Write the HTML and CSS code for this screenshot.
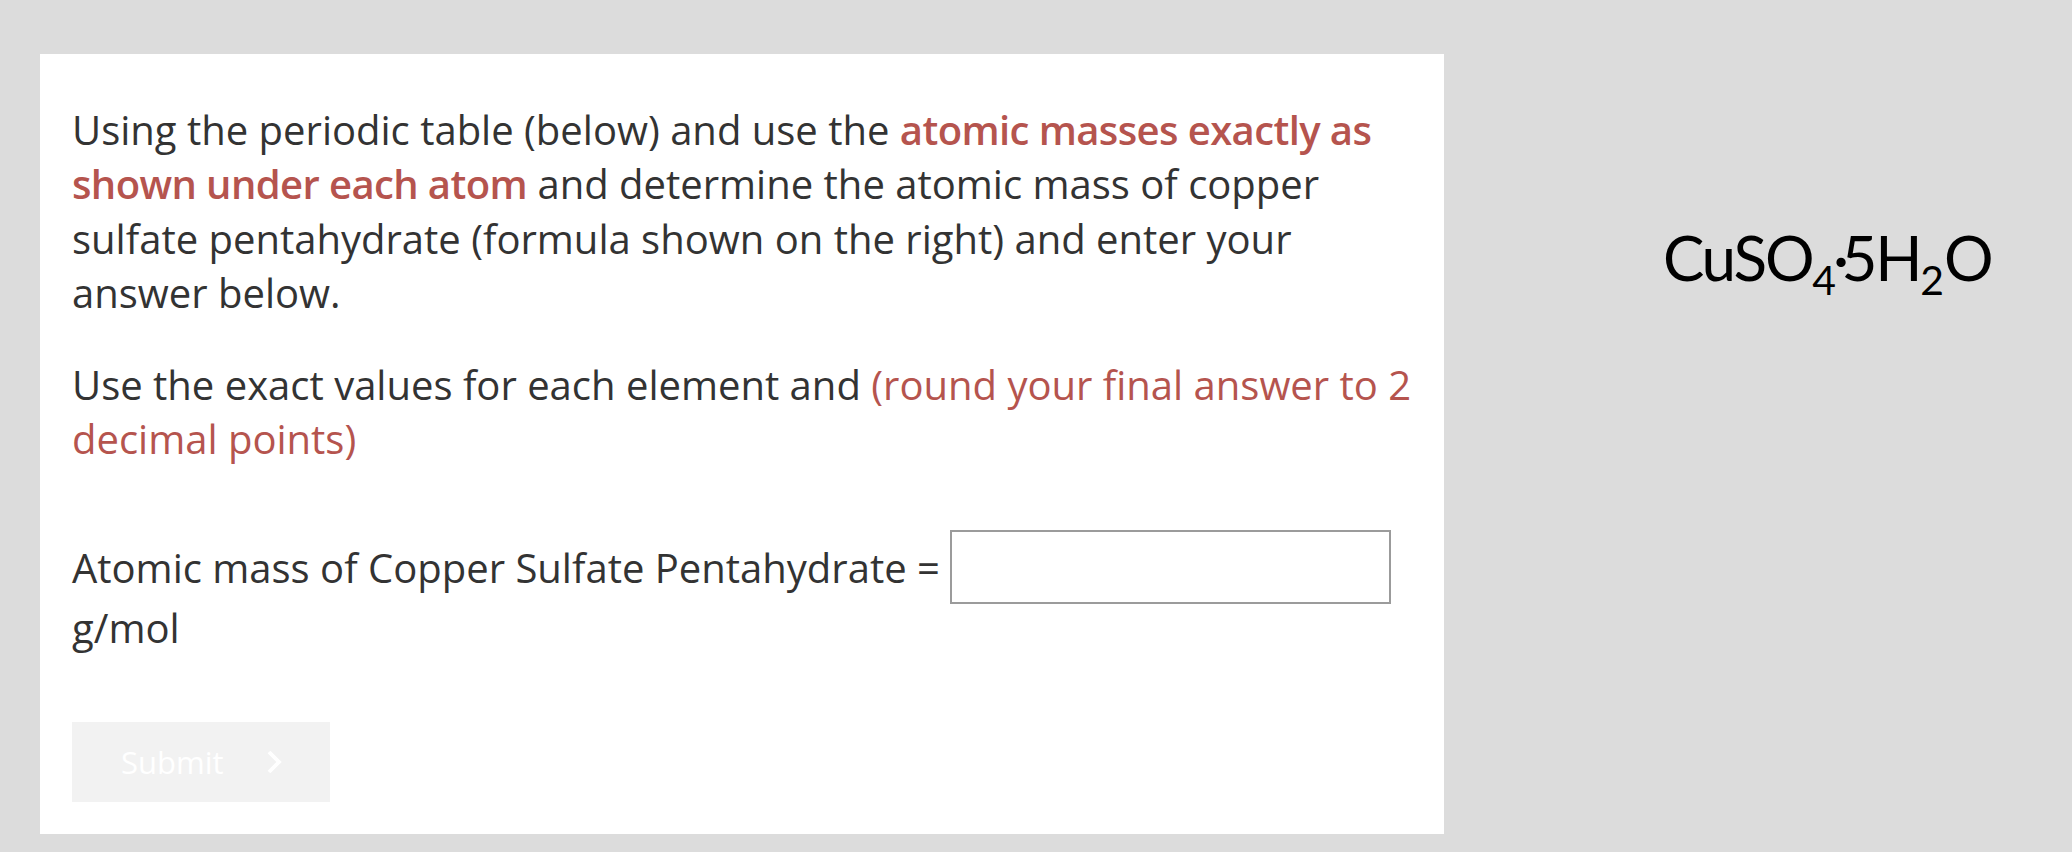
FILE: index.html
```html
<!DOCTYPE html>
<html lang="en">
<head>
<meta charset="utf-8">
<title>Copper sulfate pentahydrate</title>
<link rel="stylesheet" href="styles.css">
</head>
<body>
<main class="page">
  <section class="card">
    <p class="para">Using the periodic table (below) and use the <strong class="hl">atomic masses exactly as shown under each atom</strong> and determine the atomic mass of copper sulfate pentahydrate (formula shown on the right) and enter your answer below.</p>
    <p class="para">Use the exact values for each element and <span class="note">(round your final answer to 2 decimal points)</span></p>
    <p class="para answer-line">Atomic mass of Copper Sulfate Pentahydrate = <input class="answer" type="text" aria-label="answer"><br>g/mol</p>
    <button class="submit" type="button" disabled>
      <span>Submit</span>
      <svg class="chev" width="16" height="24" viewBox="0 0 16 24" aria-hidden="true"><polyline points="3,2 13,12 3,22" fill="none" stroke="#ffffff" stroke-width="3.8" stroke-linecap="butt" stroke-linejoin="miter"/></svg>
    </button>
  </section>
  <aside class="formula">CuSO<sub>4</sub><span class="dot">·</span>5H<sub>2</sub>O</aside>
</main>
</body>
</html>
```

FILE: styles.css
```css
html, body {
  margin: 0;
  padding: 0;
  background: #dcdcdc;
}

.page {
  display: flex;
  align-items: flex-start;
  font-family: "Open Sans", "Liberation Sans", sans-serif;
}

.card {
  box-sizing: border-box;
  width: 1404px;
  margin: 54px 0 0 40px;
  padding: 49px 20px 32px 32px;
  background: #ffffff;
  color: #333333;
  font-size: 40px;
  line-height: 54.3px;
}

.para {
  margin: 0 0 38px 0;
}

.hl {
  font-weight: 600;
  letter-spacing: -0.6px;
  color: #b5544e;
}

.note {
  color: #b5544e;
}

.answer-line {
  margin: 74px 0 0 0;
}

.answer {
  box-sizing: border-box;
  width: 441px;
  height: 74px;
  border: 2px solid #9b9b9b;
  border-radius: 0;
  background: #ffffff;
  vertical-align: middle;
  margin: -13px 0 -3px 0;
  padding: 0 10px;
  font: inherit;
}

.submit {
  display: flex;
  align-items: center;
  box-sizing: border-box;
  width: 258px;
  height: 80px;
  margin-top: 67px;
  padding: 0 0 0 49px;
  border: 0;
  background: #f2f2f2;
  color: #ffffff;
  font-family: "Open Sans", "Liberation Sans", sans-serif;
  font-size: 31px;
  cursor: default;
}

.chev {
  margin-left: 42px;
}

.formula {
  margin: 226px 0 0 219px;
  font-family: Lato, "Open Sans", sans-serif;
  font-size: 62px;
  line-height: 1;
  letter-spacing: -2.3px;
  color: #000000;
  white-space: nowrap;
}

.formula sub {
  font-size: 0.66em;
  vertical-align: -0.34em;
  line-height: 0;
  letter-spacing: 0;
}

.dot {
  margin: 0 -0.12em 0 -0.05em;
  letter-spacing: 0;
}
```
